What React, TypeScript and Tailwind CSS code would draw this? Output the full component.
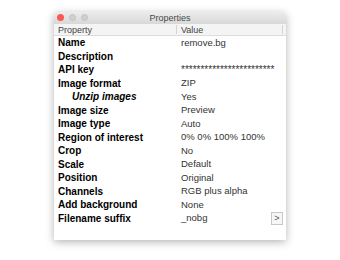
import React from "react"

const rows: { label: string; value: string; sub?: boolean; button?: boolean }[] = [
  { label: "Name", value: "remove.bg" },
  { label: "Description", value: "" },
  { label: "API key", value: "************************" },
  { label: "Image format", value: "ZIP" },
  { label: "Unzip images", value: "Yes", sub: true },
  { label: "Image size", value: "Preview" },
  { label: "Image type", value: "Auto" },
  { label: "Region of interest", value: "0% 0% 100% 100%" },
  { label: "Crop", value: "No" },
  { label: "Scale", value: "Default" },
  { label: "Position", value: "Original" },
  { label: "Channels", value: "RGB plus alpha" },
  { label: "Add background", value: "None" },
  { label: "Filename suffix", value: "_nobg", button: true },
]

export default function App() {
  return (
    <div className="w-[340px] h-[260px] bg-white pt-[12px] pl-[54px] font-['Liberation_Sans',Arial,sans-serif]">
      <div className="w-[232px] h-[228px] bg-white rounded-t-[4px] shadow-[0_2px_8px_rgba(0,0,0,0.3)] flex flex-col overflow-hidden">
        {/* title bar */}
        <div className="relative h-[12px] bg-gradient-to-b from-[#ececec] to-[#d8d8d8] flex items-center justify-center">
          <div className="absolute left-[3px] top-[2px] flex gap-[5px]">
            <span className="w-[7px] h-[7px] rounded-full bg-[#fc5753]" />
            <span className="w-[7px] h-[7px] rounded-full bg-[#d0d0d0] border border-[#c0c0c0]" />
            <span className="w-[7px] h-[7px] rounded-full bg-[#d0d0d0] border border-[#c0c0c0]" />
          </div>
          <span className="text-[9px] leading-none text-[#4a4a4a]">Properties</span>
        </div>
        {/* header */}
        <div className="h-[12px] flex bg-[#f4f4f4] border-b border-[#dcdcdc] text-[9px] text-[#444] leading-[11px]">
          <div className="w-[123px] pl-[4px] border-r border-[#d4d4d4] my-[1px]">Property</div>
          <div className="flex-1 pl-[4px] my-[1px] border-r border-[#d4d4d4] mr-[3px]">Value</div>
        </div>
        {/* rows */}
        <div className="flex flex-col">
          {rows.map((r) => (
            <div key={r.label} className="h-[13.5px] flex items-center text-[10px] text-black">
              <div
                className={
                  r.sub
                    ? "w-[123px] pl-[18px] font-bold italic"
                    : "w-[123px] pl-[4px] font-bold"
                }
              >
                {r.label}
              </div>
              <div className="flex-1 pl-[4px] flex items-center justify-between pr-[3px] text-[9.5px] text-[#333]">
                <span className={r.value.startsWith("*") ? "text-[10px]" : ""}>{r.value}</span>
                {r.button && (
                  <span className="w-[12px] h-[13px] border border-[#c8c8c8] bg-[#f6f6f6] text-[9px] text-[#555] flex items-center justify-center">
                    &gt;
                  </span>
                )}
              </div>
            </div>
          ))}
        </div>
      </div>
    </div>
  )
}
